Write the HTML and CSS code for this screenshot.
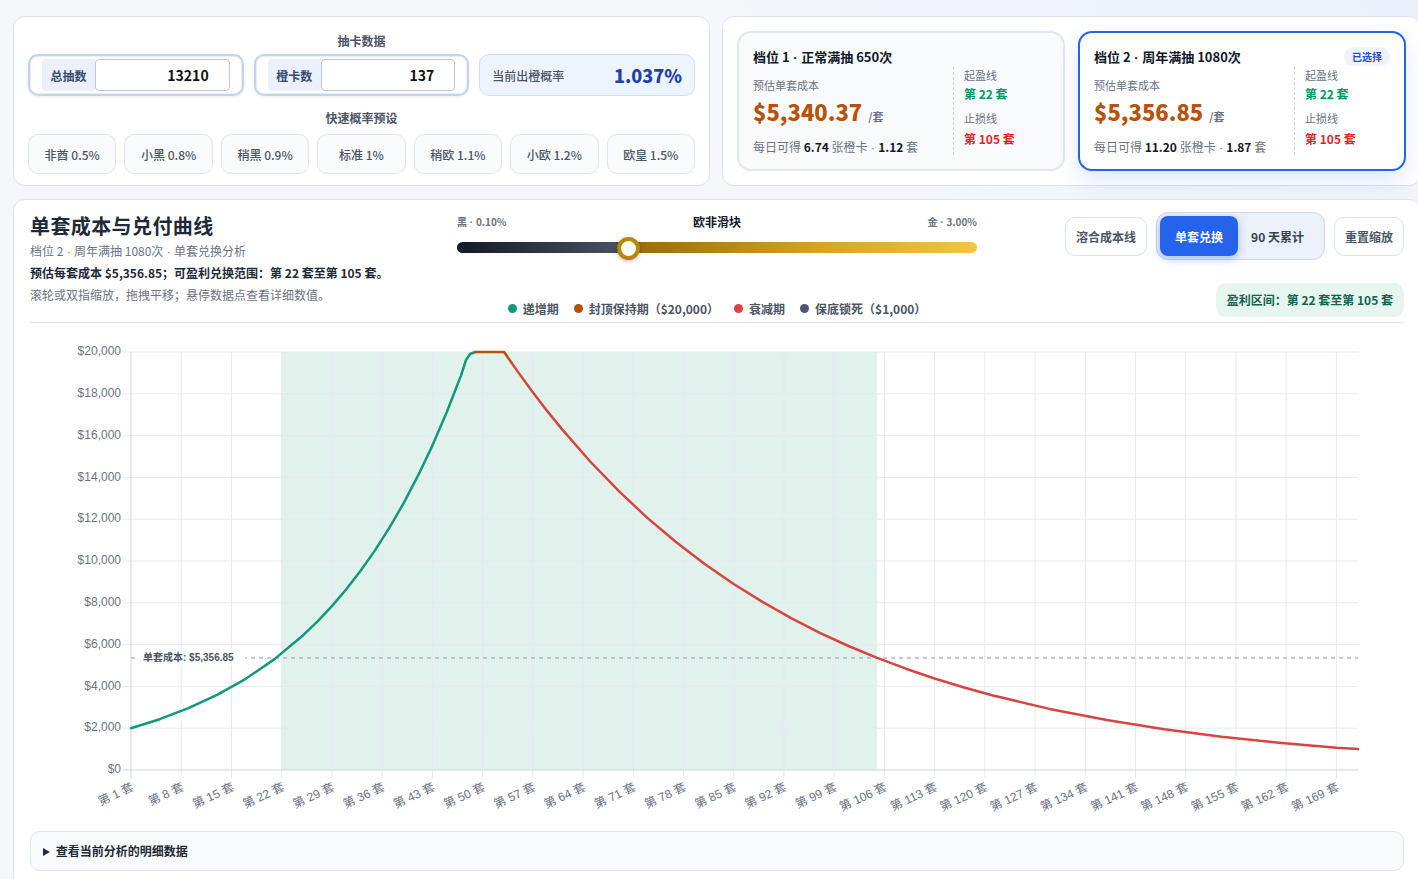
FILE: index.html
```html
<!DOCTYPE html>
<html lang="zh-CN">
<head>
<meta charset="utf-8">
<title>单套成本与兑付曲线</title>
<link rel="stylesheet" href="styles.css">
</head>
<body>
<div class="page">
  <div class="top">
    <section class="card input-card">
      <div class="sec-title">抽卡数据</div>
      <div class="input-row">
        <div class="field"><span class="chip">总抽数</span><span class="inp">13210</span></div>
        <div class="field"><span class="chip">橙卡数</span><span class="inp">137</span></div>
        <div class="rate"><span>当前出橙概率</span><strong>1.037%</strong></div>
      </div>
      <div class="sec-title sec-title-2">快速概率预设</div>
      <div class="presets">
        <button class="preset">非酋 0.5%</button>
        <button class="preset">小黑 0.8%</button>
        <button class="preset">稍黑 0.9%</button>
        <button class="preset">标准 1%</button>
        <button class="preset">稍欧 1.1%</button>
        <button class="preset">小欧 1.2%</button>
        <button class="preset">欧皇 1.5%</button>
      </div>
    </section>
    <section class="card tier-wrap">
      <div class="tier">
        <div class="tier-head"><span class="tier-title">档位 1<span class="sep"> · </span>正常满抽 650次</span></div>
        <div class="tier-body">
          <div class="tier-main">
            <div class="muted-sm">预估单套成本</div>
            <div class="price">$5,340.37<span class="unit">/套</span></div>
            <div class="daily">每日可得 <b>6.74</b> 张橙卡<span class="sep"> · </span><b>1.12</b> 套</div>
          </div>
          <div class="tier-side">
            <div class="muted-sm">起盈线</div>
            <div class="green">第 22 套</div>
            <div class="muted-sm side-gap">止损线</div>
            <div class="red">第 105 套</div>
          </div>
        </div>
      </div>
      <div class="tier tier-active">
        <div class="tier-head"><span class="tier-title">档位 2<span class="sep"> · </span>周年满抽 1080次</span><span class="badge">已选择</span></div>
        <div class="tier-body">
          <div class="tier-main">
            <div class="muted-sm">预估单套成本</div>
            <div class="price">$5,356.85<span class="unit">/套</span></div>
            <div class="daily">每日可得 <b>11.20</b> 张橙卡<span class="sep"> · </span><b>1.87</b> 套</div>
          </div>
          <div class="tier-side">
            <div class="muted-sm">起盈线</div>
            <div class="green">第 22 套</div>
            <div class="muted-sm side-gap">止损线</div>
            <div class="red">第 105 套</div>
          </div>
        </div>
      </div>
    </section>
  </div>

  <section class="card chart-card">
    <div class="chart-head">
      <div class="head-left">
        <h1>单套成本与兑付曲线</h1>
        <p class="sub">档位 2<span class="sep"> · </span>周年满抽 1080次<span class="sep"> · </span>单套兑换分析</p>
        <p class="summary">预估每套成本 $5,356.85；可盈利兑换范围：第 22 套至第 105 套。</p>
        <p class="hint">滚轮或双指缩放，拖拽平移；悬停数据点查看详细数值。</p>
      </div>
      <div class="head-mid">
        <div class="slider-labels"><span>黑<span class="sep"> · </span>0.10%</span><strong>欧非滑块</strong><span>金<span class="sep"> · </span>3.00%</span></div>
        <div class="track"><span class="thumb" style="left:32.9%"></span></div>
        <div class="legend">
          <span class="lg"><i class="dot d-green"></i>递增期</span>
          <span class="lg"><i class="dot d-orange"></i>封顶保持期（$20,000）</span>
          <span class="lg"><i class="dot d-red"></i>衰减期</span>
          <span class="lg"><i class="dot d-slate"></i>保底锁死（$1,000）</span>
        </div>
      </div>
      <div class="head-right">
        <div class="btn-row">
          <button class="btn">溶合成本线</button>
          <div class="toggle">
            <button class="tg tg-on">单套兑换</button>
            <button class="tg">90 天累计</button>
          </div>
          <button class="btn">重置缩放</button>
        </div>
        <div class="profit-pill">盈利区间：第 22 套至第 105 套</div>
      </div>
    </div>

    <svg class="chart" width="1374" height="499" viewBox="30 323 1374 499" xmlns="http://www.w3.org/2000/svg">
      <rect x="281.7" y="351" width="595.5" height="418" fill="#e1f1ec"/>
      <path class="grid" d="M123 351H1358M123 392.8H1358M123 434.6H1358M123 476.4H1358M123 518.2H1358M123 560H1358M123 601.8H1358M123 643.6H1358M123 685.4H1358M123 727.2H1358"/>
      <path class="grid" d="M181.2 351V777M231.5 351V777M281.7 351V777M331.9 351V777M382.1 351V777M432.4 351V777M482.6 351V777M532.8 351V777M583 351V777M633.3 351V777M683.5 351V777M733.7 351V777M783.9 351V777M834.2 351V777M884.4 351V777M934.6 351V777M984.8 351V777M1035.1 351V777M1085.3 351V777M1135.5 351V777M1185.7 351V777M1236 351V777M1286.2 351V777M1336.4 351V777"/>
      <path class="axis" d="M131 351V777M123 769H1358"/>
      <g class="ylab">
        <text x="121" y="351">$20,000</text>
        <text x="121" y="392.8">$18,000</text>
        <text x="121" y="434.6">$16,000</text>
        <text x="121" y="476.4">$14,000</text>
        <text x="121" y="518.2">$12,000</text>
        <text x="121" y="560">$10,000</text>
        <text x="121" y="601.8">$8,000</text>
        <text x="121" y="643.6">$6,000</text>
        <text x="121" y="685.4">$4,000</text>
        <text x="121" y="727.2">$2,000</text>
        <text x="121" y="769">$0</text>
      </g>
      <g class="xlab">
        <text transform="translate(133 786) rotate(-25)">第 1 套</text>
        <text transform="translate(183.2 786) rotate(-25)">第 8 套</text>
        <text transform="translate(233.5 786) rotate(-25)">第 15 套</text>
        <text transform="translate(283.7 786) rotate(-25)">第 22 套</text>
        <text transform="translate(333.9 786) rotate(-25)">第 29 套</text>
        <text transform="translate(384.1 786) rotate(-25)">第 36 套</text>
        <text transform="translate(434.4 786) rotate(-25)">第 43 套</text>
        <text transform="translate(484.6 786) rotate(-25)">第 50 套</text>
        <text transform="translate(534.8 786) rotate(-25)">第 57 套</text>
        <text transform="translate(585 786) rotate(-25)">第 64 套</text>
        <text transform="translate(635.3 786) rotate(-25)">第 71 套</text>
        <text transform="translate(685.5 786) rotate(-25)">第 78 套</text>
        <text transform="translate(735.7 786) rotate(-25)">第 85 套</text>
        <text transform="translate(785.9 786) rotate(-25)">第 92 套</text>
        <text transform="translate(836.2 786) rotate(-25)">第 99 套</text>
        <text transform="translate(886.4 786) rotate(-25)">第 106 套</text>
        <text transform="translate(936.6 786) rotate(-25)">第 113 套</text>
        <text transform="translate(986.8 786) rotate(-25)">第 120 套</text>
        <text transform="translate(1037.1 786) rotate(-25)">第 127 套</text>
        <text transform="translate(1087.3 786) rotate(-25)">第 134 套</text>
        <text transform="translate(1137.5 786) rotate(-25)">第 141 套</text>
        <text transform="translate(1187.7 786) rotate(-25)">第 148 套</text>
        <text transform="translate(1238 786) rotate(-25)">第 155 套</text>
        <text transform="translate(1288.2 786) rotate(-25)">第 162 套</text>
        <text transform="translate(1338.4 786) rotate(-25)">第 169 套</text>
      </g>
      <line class="cost-line" x1="131" y1="657" x2="1358" y2="657"/>
      <polyline class="ln ln-green" points="131,727.2 159.7,718.2 188.4,707.2 217.1,693.9 245.8,677.8 274.5,658.1 303.2,634.2 317.6,620.4 331.9,605.1 346.3,588.3 360.6,569.8 375,549.4 389.3,526.9 403.7,502.1 418,474.7 432.4,444.6 446.7,411.3 461,374.6 466,359 470,353 475.4,351"/>
      <polyline class="ln ln-orange" points="475.4,351 504.1,351 511.3,361.4"/>
      <polyline class="ln ln-red" points="511.3,361.4 518.5,371.6 532.8,391.2 547.1,409.9 561.5,427.6 590.2,460.5 618.9,490.2 647.6,517.1 676.3,541.3 705,563.2 733.7,583 762.4,600.9 791.1,617.1 819.8,631.8 848.5,645 877.2,656.9 905.9,667.7 934.6,677.5 963.3,686.2 992,694.2 1049.4,707.9 1106.8,719.1 1164.2,728.2 1221.6,735.7 1279,741.8 1336.4,746.8 1358,748.1"/>
      <rect x="139" y="650" width="106" height="14" fill="#ffffff"/>
      <text class="cost-label" x="143" y="657">单套成本: $5,356.85</text>
    </svg>

    <details class="detail-bar"><summary>查看当前分析的明细数据</summary></details>
  </section>
</div>
</body>
</html>
```

FILE: styles.css
```css
* { box-sizing: border-box; }
html, body { margin: 0; padding: 0; }
body {
  width: 1418px;
  height: 879px;
  overflow: hidden;
  background: radial-gradient(ellipse 700px 300px at 100% 0%, #eaeffb 0%, rgba(234,239,251,0) 100%), #f4f6fa;
  font-family: "Noto Sans CJK SC", "Noto Sans", sans-serif;
  color: #111827;
}
button { font-family: inherit; cursor: pointer; }
.sep { font-family: "Liberation Sans", sans-serif; }
.page { width: 1408px; margin-left: 13px; padding-top: 16px; }
.top { display: grid; grid-template-columns: 697px 699px; gap: 12px; }
.card { background: #fff; border: 1px solid #dde3ee; border-radius: 12px; }

/* input card */
.input-card { height: 170px; padding: 16px 14px 11px; }
.sec-title { text-align: center; font-size: 12px; line-height: 16px; font-weight: 700; color: #4b5563; }
.sec-title-2 { margin-top: 14px; }
.input-row { display: grid; grid-template-columns: repeat(3, 1fr); gap: 10px; margin-top: 5px; height: 42px; }
.field {
  display: flex; align-items: stretch;
  border: 2px solid #c4d3ec; border-radius: 10px;
  padding: 3px 12px 3px 12px;
  box-shadow: 0 0 0 1px #e9eff9 inset, 0 1px 3px rgba(60,90,150,0.12);
}
.chip {
  display: flex; align-items: center; justify-content: center;
  width: 53px; background: #eaf1fc; border-radius: 4px 0 0 4px;
  font-size: 12px; font-weight: 700; color: #3b4a6b;
}
.inp {
  flex: 1; display: flex; align-items: center; justify-content: flex-end;
  border: 1px solid #b9c6dc; border-radius: 4px; background: #fff;
  padding-right: 20px; font-size: 14px; font-weight: 700; color: #111;
}
.rate {
  display: flex; align-items: center; justify-content: space-between;
  background: #eef4fe; border: 1px solid #d0ddf4; border-radius: 10px; padding: 0 12px;
}
.rate span { font-size: 12px; color: #4b5563; font-weight: 500; }
.rate strong { font-size: 18px; color: #1e40af; font-weight: 900; }
.presets { display: flex; gap: 8px; margin-top: 8px; }
.preset {
  flex: 1; height: 40px; background: #f8fafc; border: 1px solid #e1e6ee; border-radius: 10px;
  font-size: 12px; color: #4b5563; font-weight: 500;
}

/* tiers */
.tier-wrap { height: 170px; padding: 14px 14px; display: grid; grid-template-columns: 1fr 1fr; gap: 13px; }
.tier {
  background: #f8fafc; border: 2px solid #e1e7f0; border-radius: 14px;
  padding: 13px 14px 0;
}
.tier-active { background: #fff; border-color: #2563eb; box-shadow: 0 10px 22px rgba(37,99,235,0.14); }
.tier-head { display: flex; justify-content: space-between; align-items: center; height: 20px; }
.tier-title { font-size: 13px; font-weight: 700; color: #111827; }
.badge {
  font-size: 10px; font-weight: 700; color: #1d4ed8; background: #eef3ff;
  border-radius: 10px; padding: 0 8px; line-height: 19px;
}
.tier-body { display: flex; }
.tier-main { flex: 1; padding-top: 11px; }
.muted-sm { font-size: 11px; line-height: 16px; color: #6b7280; }
.price { font-size: 22px; line-height: 32px; font-weight: 900; color: #b45309; margin-top: 2px; }
.unit { font-size: 11px; font-weight: 700; color: #6b7280; margin-left: 6px; }
.daily { font-size: 12px; line-height: 18px; color: #6b7280; margin-top: 6px; }
.daily b { color: #111827; font-weight: 700; }
.tier-side { width: 96px; border-left: 1px dashed #cfd5de; padding-left: 10px; height: 88px; margin-top: 1px; }
.green { font-size: 12px; line-height: 18px; font-weight: 700; color: #059669; margin-top: 2px; }
.red { font-size: 12px; line-height: 18px; font-weight: 700; color: #dc2626; margin-top: 4px; }
.side-gap { margin-top: 7px; }

/* chart card */
.chart-card { margin-top: 13px; padding: 12px 16px 16px; height: 700px; }
.chart-head {
  display: grid; grid-template-columns: 1fr 520px 1fr;
  padding-bottom: 4px; border-bottom: 1px solid #e3e8ef; height: 111px;
}
.head-left h1 { margin: 0; font-size: 20px; line-height: 28px; font-weight: 700; color: #1f2937; letter-spacing: 0.4px; }
.head-left p { margin: 0; font-size: 12px; line-height: 18px; }
.sub { color: #6b7280; margin-top: 2px !important; }
.summary { color: #1f2937; font-weight: 700; margin-top: 3px !important; }
.hint { color: #6b7280; margin-top: 4px !important; }

.head-mid { display: flex; flex-direction: column; }
.slider-labels { display: flex; justify-content: space-between; align-items: center; height: 18px; }
.slider-labels span { font-size: 10px; font-weight: 700; color: #6b7280; }
.slider-labels strong { font-size: 12px; font-weight: 700; color: #111827; }
.track {
  position: relative; height: 11px; margin-top: 12px; border-radius: 6px;
  background: linear-gradient(90deg, #121826 0%, #4b5563 32.9%, #9a680b 32.9%, #d6a41f 70%, #f3c545 100%);
}
.thumb {
  position: absolute; top: 50%; width: 23px; height: 23px; margin: -11px 0 0 -11.5px;
  border-radius: 50%; background: #fff; border: 4px solid #b8860b;
  box-shadow: 0 1px 4px rgba(0,0,0,0.25);
}
.legend { margin-top: auto; display: flex; justify-content: center; gap: 15px; height: 19px; align-items: center; }
.lg { display: flex; align-items: center; font-size: 12px; font-weight: 600; color: #4b5563; }
.dot { width: 9px; height: 9px; border-radius: 50%; margin-right: 6px; display: inline-block; }
.d-green { background: #11977a; }
.d-orange { background: #b45309; }
.d-red { background: #dc4343; }
.d-slate { background: #4b5873; }

.head-right { display: flex; flex-direction: column; align-items: flex-end; }
.btn-row { display: flex; align-items: center; gap: 9px; }
.btn {
  height: 39px; padding: 0 10px; background: #fff; border: 1px solid #dbe3ef; border-radius: 10px;
  font-size: 12px; font-weight: 700; color: #4b5563;
}
.toggle {
  display: flex; height: 48px; padding: 3px; background: #ebf0f9; border: 1px solid #c9d6ec; border-radius: 12px;
}
.tg {
  border: 0; background: transparent; font-size: 12px; font-weight: 700; color: #374151;
  padding: 0 17px 0 13px; border-radius: 8px;
}
.tg-on { background: #2563eb; color: #fff; width: 78px; padding: 0; box-shadow: 0 3px 8px rgba(37,99,235,0.35); }
.profit-pill {
  margin-top: 23px; height: 34px; line-height: 34px; padding: 0 11px;
  background: #e6f6ef; border-radius: 10px; font-size: 12px; font-weight: 700; color: #14634f;
}

.chart { display: block; margin-top: 1px; }
.grid { stroke: #e6e9f1; stroke-width: 1; fill: none; }
.axis { stroke: #cfd4dd; stroke-width: 1; fill: none; }
.ylab text { font-family: "Liberation Sans", "Noto Sans CJK SC", sans-serif; font-size: 12px; fill: #6b7280; text-anchor: end; dominant-baseline: middle; }
.xlab text { font-family: "Liberation Sans", "Noto Sans CJK SC", sans-serif; font-size: 12px; fill: #6b7280; text-anchor: end; dominant-baseline: middle; }
.cost-line { stroke: #8b95a7; stroke-width: 1; stroke-dasharray: 4 4; }
.cost-label { font-family: "Liberation Sans", "Noto Sans CJK SC", sans-serif; font-size: 10px; font-weight: 700; fill: #4b5563; dominant-baseline: middle; }
.ln { fill: none; stroke-width: 2.5; stroke-linejoin: round; stroke-linecap: round; }
.ln-green { stroke: #12987a; }
.ln-orange { stroke: #b45309; }
.ln-red { stroke: #d64541; }

.detail-bar {
  margin-top: 8px; height: 40px; background: #f8fafc; border: 1px solid #dfe5ee; border-radius: 10px;
  padding: 0 12px;
}
.detail-bar summary { line-height: 38px; font-size: 12px; font-weight: 700; color: #1f2937; cursor: pointer; }
```
